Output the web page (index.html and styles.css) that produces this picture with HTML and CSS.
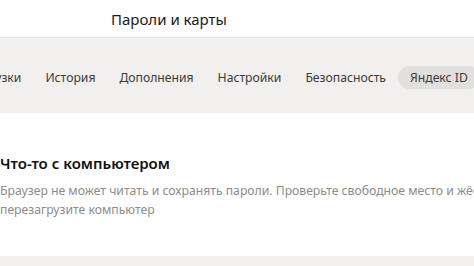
FILE: index.html
```html
<!DOCTYPE html>
<html lang="ru">
    <head>
        <meta charset="UTF-8" />
        <title>Пароли и карты</title>
        <link rel="stylesheet" href="styles.css">
    </head>
    <body>
        <!-- верхняя строка с заголовком -->
        <header class="top">
            <h1 class="ttl">Пароли и карты</h1>
        </header>

        <!-- вкладки -->
        <nav class="tabs">
            <a class="tab first">Загрузки</a>
            <a class="tab">История</a>
            <a class="tab">Дополнения</a>
            <a class="tab">Настройки</a>
            <a class="tab">Безопасность</a>
            <a class="tab on">Яндекс ID</a>
        </nav>

        <!-- сообщение об ошибке -->
        <main class="msg">
            <h2 class="msg-ttl">Что-то с компьютером</h2>
            <p class="msg-txt">
                Браузер не может читать и сохранять пароли. Проверьте свободное место и жёсткий диск или<br>
                перезагрузите компьютер
            </p>
        </main>

        <div class="foot"></div>
    </body>
</html>
```

FILE: styles.css
```css
html,
body {
    margin: 0;
    height: 100%;
}

body {
    overflow: hidden;
    background-color: #fff;
    font-family: "Noto Sans", "Open Sans", sans-serif;
    color: #222;
}

/* верхняя строка */
.top {
    height: 38px;
    padding-left: 111px;
    border-bottom: 1px solid #e4e2e0;
    box-sizing: border-box;
}
.ttl {
    margin: 0;
    font-size: 15px;
    font-weight: normal;
    line-height: 38px;
    color: #1a1a1a;
}

/* вкладки */
.tabs {
    display: flex;
    align-items: center;
    height: 75px;
    padding-top: 3px;
    box-sizing: border-box;
    background-color: #f1f0ef;
    white-space: nowrap;
}
.tab {
    padding: 0 12px;
    font-size: 12.2px;
    line-height: 23px;
    color: #3a3a3a;
}
/* первую вкладку видно не целиком */
.tab.first {
    margin-left: -43px;
}
/* выбранная вкладка - серая пилюля */
.tab.on {
    background-color: #e2e0de;
    border-radius: 12px;
}

/* сообщение */
.msg {
    height: 143px;
    padding-top: 38px;
    box-sizing: border-box;
}
.msg-ttl {
    margin: 0 0 6px;
    font-size: 15px;
    font-weight: 600;
    line-height: 24px;
    color: #111;
}
.msg-txt {
    margin: 0;
    width: 700px;
    font-size: 12.2px;
    line-height: 19px;
    color: #8c8c8c;
}

/* нижняя серая полоса */
.foot {
    height: 20px;
    background-color: #f1f0ef;
}
```
